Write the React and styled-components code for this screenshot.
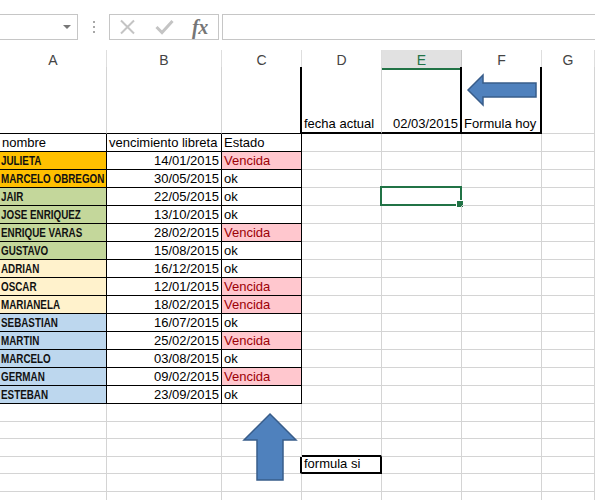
import React from "react";
import styled, { createGlobalStyle } from "styled-components";

const GlobalStyle = createGlobalStyle`
  html, body {
    margin: 0;
    padding: 0;
    background: #ffffff;
    overflow: hidden;
  }
  * { box-sizing: border-box; }
`;

const GRID = "#d4d4d4";
const COLS = "107px 115px 80px 80px 80px 80px 1fr";

const Page = styled.div`
  position: relative;
  width: 595px;
  height: 500px;
  overflow: hidden;
  font-family: "Liberation Sans", Arial, sans-serif;
`;

const Toolbar = styled.div`
  display: flex;
  align-items: flex-start;
  height: 50px;
  padding-top: 14px;
`;

const NameBox = styled.div`
  width: 79px;
  height: 26px;
  margin-left: -1px;
  border: 1px solid #c6c6c6;
  display: flex;
  align-items: center;
  justify-content: flex-end;
  padding-right: 6px;
`;

const Caret = styled.div`
  width: 0;
  height: 0;
  border-left: 4px solid transparent;
  border-right: 4px solid transparent;
  border-top: 4px solid #777;
`;

const Dots = styled.div`
  width: 31px;
  height: 26px;
  display: flex;
  flex-direction: column;
  align-items: center;
  justify-content: center;
  gap: 3px;
  span {
    width: 2px;
    height: 2px;
    background: #a8a8a8;
  }
`;

const FxGroup = styled.div`
  width: 110px;
  height: 26px;
  border: 1px solid #c6c6c6;
  display: flex;
  align-items: center;
  padding-left: 7px;
`;

const IconSlot = styled.div`
  width: ${(p) => p.$w}px;
  display: flex;
  align-items: center;
  justify-content: center;
`;

const Fx = styled.span`
  font-family: "Liberation Serif", "Times New Roman", serif;
  font-style: italic;
  font-weight: bold;
  font-size: 20px;
  line-height: 20px;
  color: #767676;
  letter-spacing: -0.5px;
  margin-left: 1px;
`;

const FormulaInput = styled.div`
  flex: 1;
  height: 26px;
  margin-left: 3px;
  margin-right: -1px;
  border: 1px solid #c6c6c6;
`;

const ColumnHeaders = styled.div`
  display: grid;
  grid-template-columns: ${COLS};
  height: 17px;
  border-bottom: 1px solid #ababab;
`;

const ColHead = styled.div`
  display: flex;
  align-items: center;
  justify-content: center;
  font-size: 14px;
  color: ${(p) => (p.$active ? "#217346" : "#444")};
  background: ${(p) => (p.$active ? "#e1e1e1" : "#fff")};
  border-right: 1px solid ${(p) => (p.$active ? "#c6c6c6" : "#dedede")};
  border-bottom: ${(p) => (p.$active ? "2px solid #217346" : "none")};
  padding-top: ${(p) => (p.$active ? "2px" : "0")};
`;

const Sheet = styled.div`
  display: grid;
  grid-template-columns: ${COLS};
  grid-template-rows: 67px repeat(15, 18px) repeat(6, 17.5px);
`;

const Cell = styled.div`
  position: relative;
  display: flex;
  align-items: flex-end;
  justify-content: ${(p) => (p.$right ? "flex-end" : "flex-start")};
  padding: 0 2px 1px 2px;
  white-space: nowrap;
  font-size: 13px;
  line-height: 15px;
  color: ${(p) => p.$color || "#000"};
  background: ${(p) => p.$bg || "transparent"};
  border-right: ${(p) => p.$r || `1px solid ${GRID}`};
  border-bottom: ${(p) => p.$b || `1px solid ${GRID}`};
`;

/* Arial Narrow Bold look: Liberation Sans bold squeezed horizontally */
const Name = styled.span`
  display: inline-block;
  font-weight: bold;
  font-size: 12px;
  line-height: 14px;
  color: #111;
  transform: scaleX(0.82);
  transform-origin: left bottom;
  margin-left: -1px;
`;

const Selection = styled.div`
  position: absolute;
  top: -2px;
  left: -2px;
  right: -1px;
  bottom: -1px;
  border: 2px solid #217346;
  pointer-events: none;
  &::after {
    content: "";
    position: absolute;
    right: -4px;
    bottom: -4px;
    width: 6px;
    height: 6px;
    background: #217346;
    border: 1px solid #fff;
  }
`;

const Shape = styled.svg`
  position: absolute;
  left: ${(p) => p.$x}px;
  top: ${(p) => p.$y}px;
  overflow: visible;
`;

const FILL = {
  orange: "#ffc000",
  green: "#c4d79b",
  yellow: "#fff2cc",
  blue: "#bdd7ee",
};

const people = [
  ["JULIETA", "14/01/2015", "Vencida", "orange"],
  ["MARCELO OBREGON", "30/05/2015", "ok", "orange"],
  ["JAIR", "22/05/2015", "ok", "green"],
  ["JOSE ENRIQUEZ", "13/10/2015", "ok", "green"],
  ["ENRIQUE VARAS", "28/02/2015", "Vencida", "green"],
  ["GUSTAVO", "15/08/2015", "ok", "green"],
  ["ADRIAN", "16/12/2015", "ok", "yellow"],
  ["OSCAR", "12/01/2015", "Vencida", "yellow"],
  ["MARIANELA", "18/02/2015", "Vencida", "yellow"],
  ["SEBASTIAN", "16/07/2015", "ok", "blue"],
  ["MARTIN", "25/02/2015", "Vencida", "blue"],
  ["MARCELO", "03/08/2015", "ok", "blue"],
  ["GERMAN", "09/02/2015", "Vencida", "blue"],
  ["ESTEBAN", "23/09/2015", "ok", "blue"],
];

const THIN = "1px solid #000";
const THICK = "2px solid #000";

function cellProps(r, c) {
  const p = {};
  // main table A2:C16
  if (c <= 2 && r >= 1 && r <= 15) {
    p.$r = THIN;
    p.$b = THIN;
  }
  if (c <= 2 && r === 0) p.$b = THIN;
  // D1:F1 block
  if (r === 0) {
    if (c === 2) p.$r = THICK;
    if (c === 4 || c === 5) p.$r = THICK;
    if (c >= 3 && c <= 5) p.$b = THICK;
  }
  // formula si D20
  if (r === 18 && c === 3) p.$b = THICK;
  if (r === 19 && c === 2) p.$r = THICK;
  if (r === 19 && c === 3) {
    p.$r = THICK;
    p.$b = THICK;
  }
  return p;
}

function cellContent(r, c) {
  if (r === 0) {
    if (c === 3) return { text: "fecha actual" };
    if (c === 4) return { text: "02/03/2015", right: true };
    if (c === 5) return { text: "Formula hoy" };
  }
  if (r === 1) {
    if (c === 0) return { text: "nombre" };
    if (c === 1) return { text: "vencimiento libreta" };
    if (c === 2) return { text: "Estado" };
  }
  if (r >= 2 && r <= 15) {
    const [name, date, state, fill] = people[r - 2];
    if (c === 0) return { name, bg: FILL[fill] };
    if (c === 1) return { text: date, right: true };
    if (c === 2)
      return state === "Vencida"
        ? { text: state, bg: "#ffc7ce", color: "#9c0006" }
        : { text: state };
  }
  if (r === 19 && c === 3) return { text: "formula si" };
  return {};
}

const letters = ["A", "B", "C", "D", "E", "F", "G"];

export default function App() {
  const cells = [];
  for (let r = 0; r < 22; r++) {
    for (let c = 0; c < 7; c++) {
      const content = cellContent(r, c);
      cells.push(
        <Cell
          key={`${r}-${c}`}
          {...cellProps(r, c)}
          $bg={content.bg}
          $color={content.color}
          $right={content.right}
        >
          {content.name ? <Name>{content.name}</Name> : content.text}
          {r === 4 && c === 4 && <Selection />}
        </Cell>
      );
    }
  }

  return (
    <Page>
      <GlobalStyle />
      <Toolbar>
        <NameBox>
          <Caret />
        </NameBox>
        <Dots>
          <span />
          <span />
          <span />
        </Dots>
        <FxGroup>
          <IconSlot $w={20}>
            <svg width="17" height="16" viewBox="0 0 17 16">
              <path d="M2 1.5 L15 14.5 M15 1.5 L2 14.5" stroke="#c4c4c4" strokeWidth="2" fill="none" />
            </svg>
          </IconSlot>
          <IconSlot $w={54}>
            <svg width="19" height="16" viewBox="0 0 19 16">
              <path d="M1.5 8 L7 13.5 L17.5 2" stroke="#c4c4c4" strokeWidth="3" fill="none" />
            </svg>
          </IconSlot>
          <Fx>fx</Fx>
        </FxGroup>
        <FormulaInput />
      </Toolbar>

      <ColumnHeaders>
        {letters.map((l) => (
          <ColHead key={l} $active={l === "E"}>
            {l}
          </ColHead>
        ))}
      </ColumnHeaders>

      <Sheet>{cells}</Sheet>

      <Shape $x={466} $y={73} width="72" height="34" viewBox="0 0 72 34">
        <path
          d="M2 17 L17 2 L17 10 L70 10 L70 24 L17 24 L17 32 Z"
          fill="#4f81bd"
          stroke="#385d8a"
          strokeWidth="1.5"
        />
      </Shape>
      <Shape $x={242} $y={412} width="56" height="70" viewBox="0 0 56 70">
        <path
          d="M28 2 L54 28 L41 28 L41 68 L15 68 L15 28 L2 28 Z"
          fill="#4f81bd"
          stroke="#385d8a"
          strokeWidth="1.5"
        />
      </Shape>
    </Page>
  );
}
